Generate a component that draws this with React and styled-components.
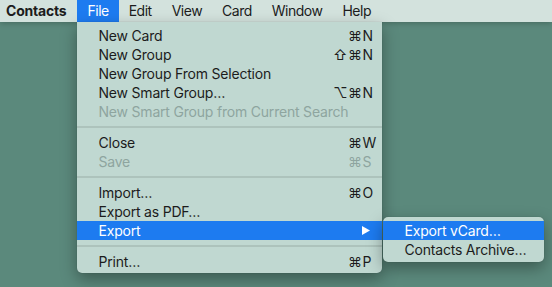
import React from "react";
import styled, { createGlobalStyle } from "styled-components";

const GlobalStyle = createGlobalStyle`
  html, body {
    margin: 0;
    padding: 0;
  }
  body {
    background: #5b897c;
    font-family: "Inter", "DejaVu Sans", sans-serif;
    letter-spacing: -0.2px;
    -webkit-font-smoothing: antialiased;
  }
`;

const Screen = styled.div`
  width: 552px;
  height: 287px;
  overflow: hidden;
  background: #5b897c;
`;

const MenuBar = styled.div`
  display: flex;
  height: 22px;
  background: #d3e2dd;
  box-shadow: 0 1px 6px rgba(0, 0, 0, 0.25);
  position: relative;
  z-index: 2;
`;

const BarItem = styled.div`
  position: relative;
  height: 22px;
  line-height: 22px;
  padding: ${(p) => (p.$first ? "0 11px 0 6px" : "0 10px")};
  font-size: 14px;
  letter-spacing: ${(p) => (p.$bold ? "-0.2px" : "-0.5px")};
  font-weight: ${(p) => (p.$bold ? 700 : 400)};
  color: ${(p) => (p.$active ? "#fff" : "#1c1c1c")};
  background: ${(p) => (p.$active ? "#1d7bf0" : "transparent")};
`;

const Dropdown = styled.div`
  position: absolute;
  top: 22px;
  left: 0;
  width: 305px;
  padding: 4px 0 2px;
  background: #c0d8d1;
  border-radius: 0 0 5px 5px;
  box-shadow: 0 6px 16px rgba(0, 0, 0, 0.35), 0 0 1px rgba(0, 0, 0, 0.3);
  line-height: normal;
  letter-spacing: -0.2px;
  font-weight: 400;
`;

const Row = styled.div`
  position: relative;
  display: flex;
  align-items: center;
  height: 19px;
  padding: 0 9px 0 21px;
  font-size: 14px;
  color: ${(p) => (p.$active ? "#fff" : p.$disabled ? "#8ea59f" : "#1c1c1c")};
  background: ${(p) => (p.$active ? "#1d7bf0" : "transparent")};
`;

const Label = styled.span`
  flex: 1;
  white-space: nowrap;
`;

const Shortcut = styled.span`
  display: flex;
  font-size: 14px;
`;

const Mods = styled.span`
  text-align: right;
  letter-spacing: 0.5px;
`;

const Key = styled.span`
  width: 11px;
  text-align: left;
`;

const Separator = styled.div`
  height: 12px;
  display: flex;
  align-items: center;

  &::before {
    content: "";
    flex: 1;
    height: 2px;
    background: #adc3bc;
  }
`;

const Arrow = styled.svg`
  width: 8px;
  height: 9px;
  margin-right: 3px;
`;

const Submenu = styled.div`
  position: absolute;
  top: -4px;
  left: calc(100% + 1px);
  width: 161px;
  padding: 4px 0 3px;
  background: #c0d8d1;
  border-radius: 5px;
  box-shadow: 0 6px 16px rgba(0, 0, 0, 0.35), 0 0 1px rgba(0, 0, 0, 0.3);
`;

const SubRow = styled(Row)`
  padding: 0 10px 0 21px;
`;

const Item = ({ label, mods, keyName, disabled, active, children }) => (
  <Row $disabled={disabled} $active={active}>
    <Label>{label}</Label>
    {keyName && (
      <Shortcut>
        <Mods>{mods}</Mods>
        <Key>{keyName}</Key>
      </Shortcut>
    )}
    {children}
  </Row>
);

export default function App() {
  return (
    <>
      <GlobalStyle />
      <Screen>
        <MenuBar>
          <BarItem $first $bold>Contacts</BarItem>
          <BarItem $active>
            File
            <Dropdown>
              <Item label="New Card" mods="⌘" keyName="N" />
              <Item label="New Group" mods="⇧⌘" keyName="N" />
              <Item label="New Group From Selection" />
              <Item label="New Smart Group…" mods="⌥⌘" keyName="N" />
              <Item label="New Smart Group from Current Search" disabled />
              <Separator />
              <Item label="Close" mods="⌘" keyName="W" />
              <Item label="Save" mods="⌘" keyName="S" disabled />
              <Separator />
              <Item label="Import…" mods="⌘" keyName="O" />
              <Item label="Export as PDF…" />
              <Item label="Export" active>
                <Arrow viewBox="0 0 8 9">
                  <path d="M0 0 L8 4.5 L0 9 Z" fill="#fff" />
                </Arrow>
                <Submenu>
                  <SubRow $active>
                    <Label>Export vCard…</Label>
                  </SubRow>
                  <SubRow>
                    <Label>Contacts Archive…</Label>
                  </SubRow>
                </Submenu>
              </Item>
              <Separator />
              <Item label="Print…" mods="⌘" keyName="P" />
            </Dropdown>
          </BarItem>
          <BarItem>Edit</BarItem>
          <BarItem>View</BarItem>
          <BarItem>Card</BarItem>
          <BarItem>Window</BarItem>
          <BarItem>Help</BarItem>
        </MenuBar>
      </Screen>
    </>
  );
}
